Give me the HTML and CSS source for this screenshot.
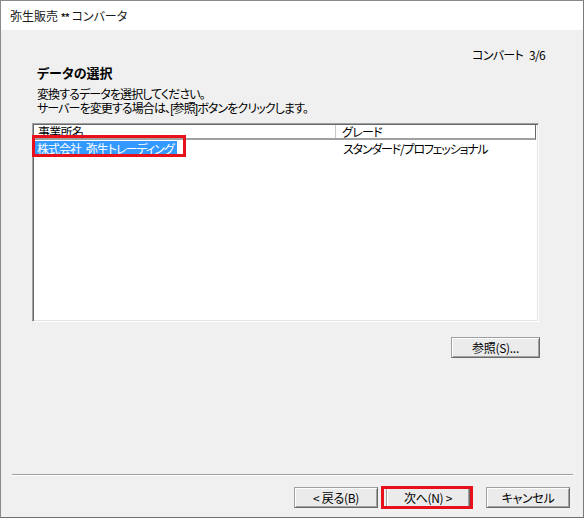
FILE: index.html
```html
<!DOCTYPE html>
<html lang="ja">
<head>
<meta charset="utf-8">
<title>弥生販売 ** コンバータ</title>
<link rel="stylesheet" href="styles.css">
</head>
<body>
<div class="window">
  <div class="titlebar">弥生販売 <span class="stars">**</span> コンバータ</div>
  <div class="content">
    <div class="step">コンバート 3/6</div>
    <div class="heading">データの選択</div>
    <div class="desc">
      <div>変換するデータを選択してください。</div>
      <div>サーバーを変更する場合は、[参照]ボタンをクリックします。</div>
    </div>
    <div class="list">
      <div class="list-head">
        <div class="col col-name">事業所名</div>
        <div class="col col-grade">グレード</div>
      </div>
      <div class="list-row">
        <div class="col col-name"><span class="selected">株式会社 弥生トレーディング</span></div>
        <div class="col col-grade">スタンダード/プロフェッショナル</div>
      </div>
      <div class="mark mark-row"></div>
    </div>
    <div class="ref-row">
      <button class="btn btn-ref">参照(S)...</button>
    </div>
    <div class="spacer"></div>
    <div class="separator"></div>
    <div class="btn-row">
      <button class="btn">&lt; 戻る(B)</button>
      <button class="btn btn-next">次へ(N) &gt;</button>
      <button class="btn btn-cancel">キャンセル</button>
    </div>
  </div>
</div>
</body>
</html>
```

FILE: styles.css
```css
* { box-sizing: border-box; }
html, body {
  margin: 0;
  padding: 0;
  width: 584px;
  height: 518px;
  overflow: hidden;
  background: #f0f0f0;
}
body {
  font-family: "Noto Sans CJK JP", "Noto Sans", sans-serif;
  font-size: 12px;
  color: #000;
  font-feature-settings: "palt";
}
.window {
  width: 584px;
  height: 518px;
  border: 1px solid #8a8a8a;
  border-bottom-color: #6e6e6e;
  border-right-color: #7a7a7a;
  display: flex;
  flex-direction: column;
}
.titlebar {
  height: 29px;
  line-height: 29px;
  background: #fff;
  padding-left: 9px;
  font-size: 12px;
  color: #1a1a1a;
  flex: none;
}
.stars {
  font-weight: bold;
  font-size: 10px;
  letter-spacing: -1px;
}
.content {
  flex: 1;
  background: #f0f0f0;
  display: flex;
  flex-direction: column;
  letter-spacing: -0.7px;
}
.step {
  margin-top: 18px;
  line-height: 14px;
  text-align: right;
  padding-right: 38px;
  word-spacing: 4px;
}
.heading {
  margin: 4px 0 0 36px;
  font-size: 13px;
  font-weight: bold;
  line-height: 14px;
  letter-spacing: 0;
}
.desc {
  margin: 9px 0 0 36px;
  font-family: "Liberation Sans", "Noto Sans CJK JP", sans-serif;
  line-height: 13.5px;
  letter-spacing: -0.9px;
}
.list {
  position: relative;
  margin: 7px 0 0 31px;
  width: 507px;
  height: 199px;
  background: #fff;
  border-top: 1px solid #a0a0a0;
  border-left: 1px solid #a0a0a0;
  border-right: 1px solid #fff;
  border-bottom: 1px solid #fff;
  box-shadow: inset 1px 1px 0 #696969, inset -1px -1px 0 #e3e3e3;
  padding: 1px 2px 2px 1px;
}
.list-head {
  display: flex;
  height: 15px;
  line-height: 13px;
  border-bottom: 2px solid #a0a0a0;
  border-right: 1px solid #696969;
}
.list-head .col-name {
  width: 302px;
  padding-left: 4px;
  border-right: 1px solid #c8c8c8;
}
.list-head .col-grade {
  flex: 1;
  padding-left: 6px;
}
.list-row {
  display: flex;
  height: 16px;
  line-height: 15px;
  padding-top: 1px;
}
.list-row .col-name {
  width: 303px;
}
.list-row .col-grade {
  padding-left: 6px;
  letter-spacing: -1.2px;
}
.selected {
  display: inline-block;
  background: #3399ff;
  color: #fff;
  padding: 0 3px;
  line-height: 15px;
  letter-spacing: -1px;
  word-spacing: 3px;
}
.mark {
  position: absolute;
  border: 3px solid #e8101a;
}
.mark-row {
  left: -1px;
  top: 11px;
  width: 154px;
  height: 22px;
}
.ref-row {
  display: flex;
  justify-content: flex-end;
  margin-top: 15px;
  padding-right: 43px;
}
.btn {
  font-family: inherit;
  font-size: 12px;
  font-feature-settings: "palt";
  letter-spacing: -0.3px;
  width: 84px;
  height: 21px;
  padding: 0;
  line-height: 18px;
  background: #ebebeb;
  color: #000;
  border: 1px solid #a0a0a0;
  border-right-color: #696969;
  border-bottom-color: #696969;
  box-shadow: inset 1px 1px 0 #fff, inset -1px -1px 0 #a0a0a0;
  position: relative;
}
.btn-ref {
  width: 89px;
}
.spacer {
  flex: 1;
}
.separator {
  margin: 0 10px 0 11px;
  border-top: 1px solid #a0a0a0;
  border-bottom: 1px solid #fff;
}
.btn-row {
  display: flex;
  justify-content: flex-end;
  margin-top: 11px;
  margin-bottom: 9px;
  padding-right: 13px;
}
.btn-next {
  margin-left: 8px;
}
.btn-next::after {
  content: "";
  position: absolute;
  top: -2px;
  bottom: -2px;
  left: -6px;
  right: -4px;
  border: 3px solid #e8101a;
}
.btn-cancel {
  margin-left: 16px;
}
```
